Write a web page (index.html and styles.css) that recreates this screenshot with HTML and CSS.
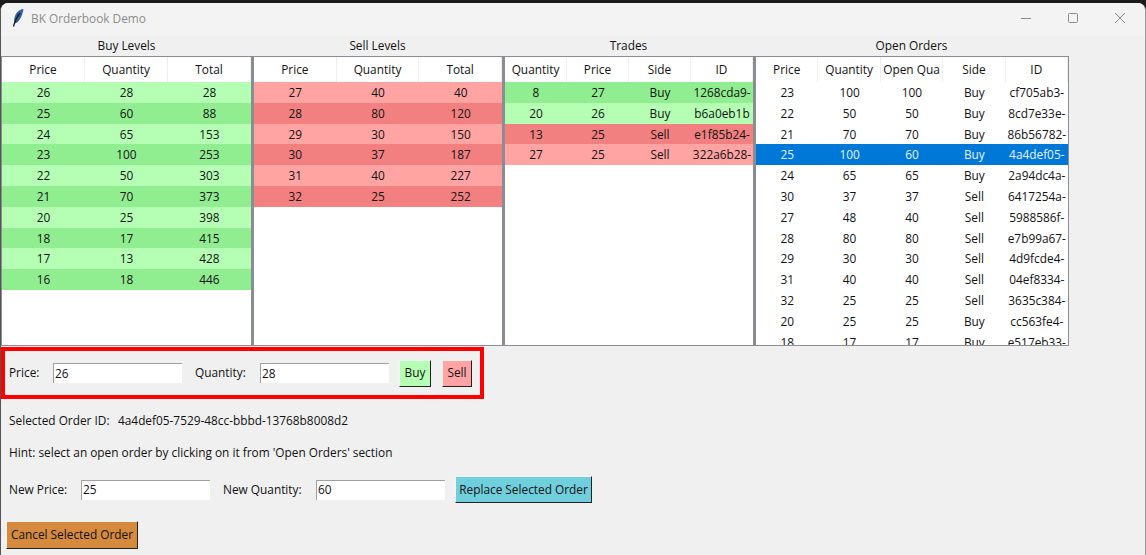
FILE: index.html
```html
<!DOCTYPE html>
<html lang="en">
<head>
<meta charset="utf-8">
<title>BK Orderbook Demo</title>
<link rel="stylesheet" href="styles.css">
</head>
<body>
<div class="window">
  <header class="titlebar">
    <svg class="feather" width="14" height="20" viewBox="0 0 14 20"><path d="M12.5 1C8 1.5 4.5 5 3.5 10c-.4 2 -.4 3.5 0 5l1 .3C8 14 11 9 12.500 1z" fill="#2c5f9e"/><path d="M9 5.500C6 8.500 4 12.500 2.500 18.500" fill="none" stroke="#1a1a1a" stroke-width="1.300"/></svg>
    <span class="title">BK Orderbook Demo</span>
    <div class="controls">
      <svg width="12" height="12" viewBox="0 0 12 12"><path d="M1 6.500h10" stroke="#8a8a8a" fill="none"/></svg>
      <svg width="12" height="12" viewBox="0 0 12 12"><rect x="1.500" y="1.500" width="9" height="9" rx="1" stroke="#8a8a8a" fill="none"/></svg>
      <svg width="12" height="12" viewBox="0 0 12 12"><path d="M1 1l10 10M11 1L1 11" stroke="#8a8a8a" fill="none"/></svg>
    </div>
  </header>

  <div class="panels">
    <section class="panel">
      <h2>Buy Levels</h2>
      <div class="table cols3">
        <div class="row head"><span>Price</span><span>Quantity</span><span>Total</span></div>
        <div class="row gl"><span>26</span><span>28</span><span>28</span></div>
        <div class="row gd"><span>25</span><span>60</span><span>88</span></div>
        <div class="row gl"><span>24</span><span>65</span><span>153</span></div>
        <div class="row gd"><span>23</span><span>100</span><span>253</span></div>
        <div class="row gl"><span>22</span><span>50</span><span>303</span></div>
        <div class="row gd"><span>21</span><span>70</span><span>373</span></div>
        <div class="row gl"><span>20</span><span>25</span><span>398</span></div>
        <div class="row gd"><span>18</span><span>17</span><span>415</span></div>
        <div class="row gl"><span>17</span><span>13</span><span>428</span></div>
        <div class="row gd"><span>16</span><span>18</span><span>446</span></div>
      </div>
    </section>
    <section class="panel">
      <h2>Sell Levels</h2>
      <div class="table cols3">
        <div class="row head"><span>Price</span><span>Quantity</span><span>Total</span></div>
        <div class="row rl"><span>27</span><span>40</span><span>40</span></div>
        <div class="row rd"><span>28</span><span>80</span><span>120</span></div>
        <div class="row rl"><span>29</span><span>30</span><span>150</span></div>
        <div class="row rd"><span>30</span><span>37</span><span>187</span></div>
        <div class="row rl"><span>31</span><span>40</span><span>227</span></div>
        <div class="row rd"><span>32</span><span>25</span><span>252</span></div>
      </div>
    </section>
    <section class="panel">
      <h2>Trades</h2>
      <div class="table cols4">
        <div class="row head"><span>Quantity</span><span>Price</span><span>Side</span><span>ID</span></div>
        <div class="row gd"><span>8</span><span>27</span><span>Buy</span><span>1268cda9-</span></div>
        <div class="row gl"><span>20</span><span>26</span><span>Buy</span><span>b6a0eb1b</span></div>
        <div class="row rd"><span>13</span><span>25</span><span>Sell</span><span>e1f85b24-</span></div>
        <div class="row rl"><span>27</span><span>25</span><span>Sell</span><span>322a6b28-</span></div>
      </div>
    </section>
    <section class="panel panel-orders">
      <h2>Open Orders</h2>
      <div class="table cols5">
        <div class="row head"><span>Price</span><span>Quantity</span><span>Open Qua</span><span>Side</span><span>ID</span></div>
        <div class="row"><span>23</span><span>100</span><span>100</span><span>Buy</span><span>cf705ab3-</span></div>
        <div class="row"><span>22</span><span>50</span><span>50</span><span>Buy</span><span>8cd7e33e-</span></div>
        <div class="row"><span>21</span><span>70</span><span>70</span><span>Buy</span><span>86b56782-</span></div>
        <div class="row selected"><span>25</span><span>100</span><span>60</span><span>Buy</span><span>4a4def05-</span></div>
        <div class="row"><span>24</span><span>65</span><span>65</span><span>Buy</span><span>2a94dc4a-</span></div>
        <div class="row"><span>30</span><span>37</span><span>37</span><span>Sell</span><span>6417254a-</span></div>
        <div class="row"><span>27</span><span>48</span><span>40</span><span>Sell</span><span>5988586f-</span></div>
        <div class="row"><span>28</span><span>80</span><span>80</span><span>Sell</span><span>e7b99a67-</span></div>
        <div class="row"><span>29</span><span>30</span><span>30</span><span>Sell</span><span>4d9fcde4-</span></div>
        <div class="row"><span>31</span><span>40</span><span>40</span><span>Sell</span><span>04ef8334-</span></div>
        <div class="row"><span>32</span><span>25</span><span>25</span><span>Sell</span><span>3635c384-</span></div>
        <div class="row"><span>20</span><span>25</span><span>25</span><span>Buy</span><span>cc563fe4-</span></div>
        <div class="row"><span>18</span><span>17</span><span>17</span><span>Buy</span><span>e517eb33-</span></div>
      </div>
    </section>
  </div>

  <form class="entry">
    <label class="lbl lbl-price">Price:</label>
    <input class="field" value="26">
    <label class="lbl lbl-qty">Quantity:</label>
    <input class="field field-qty" value="28">
    <button type="button" class="btn btn-buy">Buy</button>
    <button type="button" class="btn btn-sell">Sell</button>
  </form>

  <p class="info info-id"><span class="info-label">Selected Order ID:</span><span>4a4def05-7529-48cc-bbbd-13768b8008d2</span></p>
  <p class="info info-hint">Hint: select an open order by clicking on it from 'Open Orders' section</p>

  <div class="replace">
    <label class="lbl lbl-newprice">New Price:</label>
    <input class="field" value="25">
    <label class="lbl lbl-newqty">New Quantity:</label>
    <input class="field" value="60">
    <button type="button" class="btn btn-replace">Replace Selected Order</button>
  </div>
  <button type="button" class="btn btn-cancel">Cancel Selected Order</button>
</div>
</body>
</html>
```
FILE: styles.css
```css
* { box-sizing: border-box; }
html, body { margin: 0; height: 100%; background: #1c1c1c; overflow: hidden; }
body { padding-top: 3px; font: 11.85px/16px "Open Sans", "Noto Sans", sans-serif; color: #111; }
.window {
  height: 552px;
  background: #f0f0f0;
  border-radius: 8px 8px 0 0;
  border-left: 1px solid #555;
  border-right: 1px solid #999;
  overflow: hidden;
}
.titlebar {
  height: 33px;
  background: #f3f3f3;
  display: flex;
  align-items: center;
  padding: 0 0 4px 10px;
}
.feather { margin-right: 6px; }
.title { color: #8c8c8c; }
.controls { margin-left: auto; display: flex; gap: 35px; padding-right: 19px; }
.panels { display: flex; align-items: flex-start; height: 310px; }
.panel { width: 251px; flex: none; }
.panel-orders { width: 315px; }
.panel h2 { margin: 0; height: 20px; font: inherit; line-height: 18px; text-align: center; }
.table {
  height: 290px;
  background: #fff;
  border: 1px solid #8a8d94;
  border-left-width: 2px;
  overflow: hidden;
}
.panel:first-child .table { border-left-width: 1px; }
.row { display: grid; height: 20.8px; line-height: 20.8px; text-align: center; white-space: nowrap; }
.cols3 .row { grid-template-columns: repeat(3, 1fr); }
.cols4 .row { grid-template-columns: repeat(4, 1fr); }
.cols5 .row { grid-template-columns: repeat(5, 1fr); }
.row span { overflow: hidden; }
.row.head { height: 25px; line-height: 25px; }
.row.head span { border-right: 1px solid #efefef; }
.gl { background: #b5ffb5; }
.gd { background: #90ee90; }
.rl { background: #ffa3a3; }
.rd { background: #f38080; }
.selected { background: #0078d7; color: #e8f2fb; }
.entry {
  width: 483px;
  height: 52px;
  margin-top: 1px;
  border: 4px solid #ff0000;
  display: flex;
  align-items: center;
  padding-left: 4px;
}
.lbl { flex: none; padding-bottom: 2px; }
.lbl-price { width: 44px; }
.lbl-qty { width: 65px; margin-left: 13px; }
.field {
  width: 129px;
  height: 20px;
  padding: 0 1px 2px;
  background: #fff;
  border: 0;
  border-top: 1px solid #a0a0a0;
  border-left: 1px solid #a0a0a0;
  font: inherit;
  color: #111;
  outline: 0;
  flex: none;
}
.btn {
  height: 27px;
  padding: 0 0 2px;
  border: 1px solid #f2f2f2;
  border-right-color: #222;
  border-bottom-color: #222;
  font: inherit;
  color: #111;
}
.btn-buy { background: #b5ffb5; margin-left: 10px; width: 32px; }
.btn-sell { background: #ffa3a3; margin-left: 11px; width: 30px; }
.info { margin: 0; height: 16px; padding-left: 8px; line-height: 14px; }
.info-id { margin-top: 14px; display: flex; }
.info-label { width: 109px; }
.info-hint { margin-top: 16px; }
.replace { display: flex; align-items: center; height: 27px; margin-top: 15px; padding-left: 8px; }
.lbl-newprice { width: 72px; }
.lbl-newqty { width: 93px; margin-left: 13px; }
.btn-replace { background: #6fcfdc; margin-left: 10px; width: 137px; }
.btn-cancel { display: block; background: #d58a3e; margin: 18px 0 0 5px; width: 132px; height: 28px; }
```
